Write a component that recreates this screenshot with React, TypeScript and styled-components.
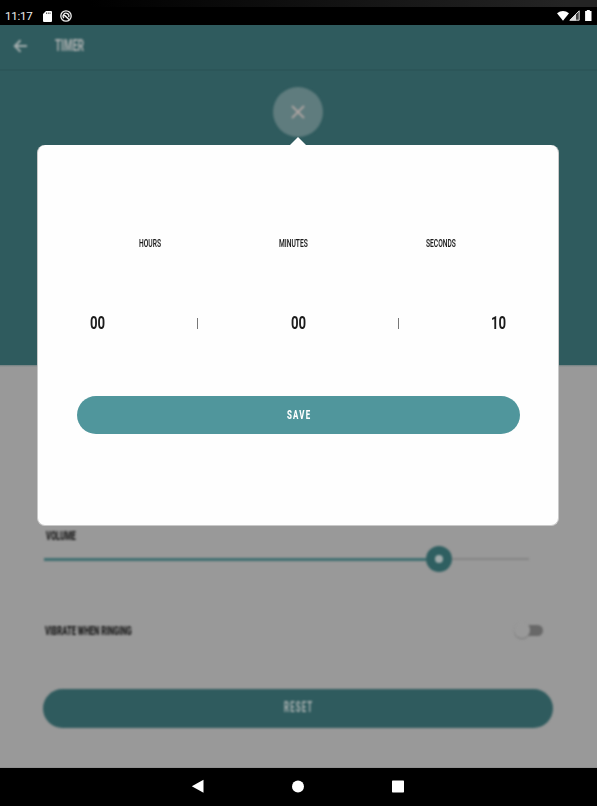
import React, { useLayoutEffect, useRef, useState } from "react";
import styled, { createGlobalStyle } from "styled-components";

const GlobalStyle = createGlobalStyle`
  * { box-sizing: border-box; }
  body { margin: 0; background: #000; font-family: Roboto, "Liberation Sans", sans-serif; overflow: hidden; }
  button { border: 0; padding: 0; font-family: inherit; }
  svg { display: block; }
`;

const Screen = styled.div`
  position: relative;
  display: flex;
  flex-direction: column;
  width: 597px;
  height: 806px;
  overflow: hidden;
`;
const TopEdge = styled.div`
  height: 7px;
  background: linear-gradient(90deg, #000 15%, #242424 95%);
`;
const StatusBar = styled.div`
  height: 18px;
  display: flex;
  align-items: center;
  justify-content: space-between;
  padding: 0 4px 0 5px;
  background: #000;
`;
const StatusGroup = styled.div`
  display: flex;
  align-items: center;
`;
const Clock = styled.span`
  width: 38px;
  color: #eee;
  font-size: 11.5px;
  line-height: 18px;
  letter-spacing: -0.2px;
`;
const Hero = styled.div`
  height: 340px;
  background: #2f5b5e;
`;
const AppBar = styled.div`
  height: 46px;
  display: flex;
  align-items: center;
  padding: 0 0 2px 13px;
  gap: 27px;
  border-bottom: 2px solid #2c5659;
`;
const Soft = styled.div`
  filter: blur(1.3px);
`;
const CloseRow = styled(Soft)`
  display: flex;
  justify-content: center;
  padding: 16px 1px 0 0;
`;
const CloseButton = styled.button`
  width: 50px;
  height: 50px;
  border-radius: 50%;
  background: #5f7c7e;
  display: grid;
  place-items: center;
`;
const Settings = styled.div`
  height: 403px;
  background: linear-gradient(#708081 0, #999 2px, #999 402px, #858585 403px);
  padding: 164px 44px 0;
`;
const SliderRow = styled(Soft)`
  display: flex;
  align-items: center;
  width: 485px;
  height: 26px;
  margin-top: 4px;
`;
const SliderPart = styled.div<{ $active?: boolean }>`
  width: ${(p) => (p.$active ? "382px" : "77px")};
  height: ${(p) => (p.$active ? "3px" : "2px")};
  background: ${(p) => (p.$active ? "#3f6e70" : "#858585")};
`;
const SliderThumb = styled.div`
  width: 26px;
  height: 26px;
  border-radius: 50%;
  border: 9px solid #2f5f61;
  background: #a0aaaa;
`;
const VibrateRow = styled(Soft)`
  display: flex;
  justify-content: space-between;
  align-items: center;
  height: 18px;
  margin: 49px 10px 0 1px;
`;
const SwitchTrack = styled.div`
  display: flex;
  align-items: center;
  width: 24px;
  height: 11px;
  border-radius: 6px;
  background: #686868;
`;
const SwitchKnob = styled.div`
  flex: none;
  width: 16px;
  height: 16px;
  margin-left: -5px;
  border-radius: 50%;
  background: #999;
  box-shadow: 0 1px 1px #777;
`;
const ResetButton = styled.button`
  display: flex;
  align-items: center;
  justify-content: center;
  width: 510px;
  height: 39px;
  margin: 50px 0 0 -1px;
  padding-bottom: 3px;
  border-radius: 20px;
  background: #2f5b5e;
  filter: blur(1.1px);
`;
const NavBar = styled.div`
  height: 38px;
  display: flex;
  justify-content: center;
  gap: 86px;
  padding: 11px 2px 0 0;
  background: #000;
`;
const Popup = styled.div`
  position: absolute;
  left: 37px;
  top: 145px;
  width: 522px;
  height: 381px;
  border-radius: 8px;
  border: 1px solid #c9c9c9;
  border-top: 0;
  background: #fefefe;
  padding: 93px 38px 0;
`;
const Pointer = styled.svg`
  position: absolute;
  left: 252px;
  top: -8px;
`;
const LabelRow = styled.div`
  display: flex;
  height: 12px;
  align-items: center;
  padding-left: 63px;
`;
const LabelCell = styled.div<{ $before?: number }>`
  margin-left: ${(p) => p.$before ?? 0}px;
`;
const ValueRow = styled.div`
  display: flex;
  align-items: center;
  justify-content: space-between;
  height: 20px;
  margin-top: 63px;
  padding: 0 14px 0 14px;
`;
const Separator = styled.div`
  width: 1px;
  height: 11px;
  margin-top: 1px;
  background: #777;
`;
const SaveButton = styled.button`
  display: flex;
  align-items: center;
  justify-content: center;
  width: 443px;
  height: 38.5px;
  margin: 62.5px 0 0 0.5px;
  padding-bottom: 1px;
  border-radius: 20px;
  background: #50969c;
`;
const TextBox = styled.span<{ $width: number }>`
  display: flex;
  width: ${(p) => p.$width}px;
`;
const TextRun = styled.span<{ $size: number; $color: string; $weight: number; $spacing: number }>`
  flex: none;
  white-space: nowrap;
  transform-origin: 0 50%;
  font-size: ${(p) => p.$size}px;
  line-height: 1;
  color: ${(p) => p.$color};
  font-weight: ${(p) => p.$weight};
  letter-spacing: ${(p) => p.$spacing}px;
`;

interface CondensedProps {
  children: string;
  width: number;
  size: number;
  color?: string;
  weight?: number;
  spacing?: number;
}

/* Fits a text run horizontally into a fixed width, giving condensed capitals. */
function Condensed({ children, width, size, color = "#1c1c1c", weight = 600, spacing = 0 }: CondensedProps) {
  const run = useRef<HTMLSpanElement>(null);
  const [scale, setScale] = useState(1);
  useLayoutEffect(() => {
    if (run.current) setScale(width / (run.current.offsetWidth - spacing));
  }, [width, children, spacing]);
  return (
    <TextBox $width={width}>
      <TextRun ref={run} $size={size} $color={color} $weight={weight} $spacing={spacing} style={{ transform: `scaleX(${scale})` }}>
        {children}
      </TextRun>
    </TextBox>
  );
}

export default function App() {
  return (
    <>
      <GlobalStyle />
      <Screen>
        <TopEdge />
        <StatusBar>
          <StatusGroup>
            <Clock>11:17</Clock>
            <svg width="9" height="11" viewBox="0 0 9 11">
              <path d="M3 0h5q1 0 1 1v9q0 1-1 1H1q-1 0-1-1V3z" fill="#fff" />
              <path d="M3.5 1.5v1.5M5.3 1.5v1.5M7 1.5v1.5" stroke="#333" strokeWidth=".8" />
            </svg>
            <svg width="22" height="12" viewBox="0 0 22 12">
              <g fill="none" stroke="#eee" strokeWidth="1.3">
                <circle cx="14" cy="6" r="5.2" />
                <path d="M11.9 8.1A2.9 2.9 0 1 1 16.7 7.2M11.3 4.6l5.8 5M13 5.6l2.6 2.4" />
              </g>
            </svg>
          </StatusGroup>
          <svg width="36" height="12" viewBox="0 0 36 12">
            <path d="M0 3.2Q6-1.4 12 3.2L6 10.7z" fill="#fff" />
            <path d="M22.2.8v9.4h-9.4z" fill="#444" stroke="#ddd" strokeWidth="1" />
            <path d="M19 4v6.5h-6.5z" fill="#ddd" />
            <path d="M29.8 0h3v1h1.7v10h-6.4V1h1.7z" fill="#fff" />
          </svg>
        </StatusBar>

        <Hero>
          <AppBar>
            <Soft>
              <svg width="15" height="14" viewBox="0 0 15 14" fill="none" stroke="#a3adad" strokeWidth="2">
                <path d="M14 7H2M7.5 1.2L1.8 7l5.7 5.8" />
              </svg>
            </Soft>
            <Soft>
              <Condensed width={29} size={16} weight={800} color="#a8adad">TIMER</Condensed>
            </Soft>
          </AppBar>
          <CloseRow>
            <CloseButton aria-label="Close">
              <svg width="14" height="14" viewBox="0 0 14 14" stroke="#aaa3a0" strokeWidth="2">
                <path d="M1 1l12 12M13 1L1 13" />
              </svg>
            </CloseButton>
          </CloseRow>
        </Hero>

        <Settings>
          <Soft>
            <LabelCell $before={2}>
              <Condensed width={30} size={13} weight={900} color="#1c1c1c">VOLUME</Condensed>
            </LabelCell>
          </Soft>
          <SliderRow>
            <SliderPart $active />
            <SliderThumb />
            <SliderPart />
          </SliderRow>
          <VibrateRow>
            <Condensed width={87} size={13} weight={900} color="#1c1c1c">VIBRATE WHEN RINGING</Condensed>
            <SwitchTrack>
              <SwitchKnob />
            </SwitchTrack>
          </VibrateRow>
          <ResetButton>
            <Condensed width={28} size={14} weight={800} spacing={2} color="#a8b0b0">RESET</Condensed>
          </ResetButton>
        </Settings>

        <NavBar>
          <svg width="14" height="14" viewBox="0 0 14 14"><path d="M12.5.8v13L.8 7.3z" fill="#fff" /></svg>
          <svg width="14" height="14" viewBox="0 0 14 14"><circle cx="7" cy="7.5" r="6" fill="#fff" /></svg>
          <svg width="14" height="14" viewBox="0 0 14 14"><rect x="1" y="1.5" width="12" height="12" rx=".7" fill="#fff" /></svg>
        </NavBar>

        <Popup>
          <Pointer width="16" height="9" viewBox="0 0 16 9"><path d="M0 8L8 0l8 8v1H0z" fill="#fefefe" /></Pointer>
          <LabelRow>
            <Condensed width={22} size={11.5}>HOURS</Condensed>
            <LabelCell $before={118}>
              <Condensed width={29} size={11.5}>MINUTES</Condensed>
            </LabelCell>
            <LabelCell $before={118}>
              <Condensed width={30} size={11.5}>SECONDS</Condensed>
            </LabelCell>
          </LabelRow>
          <ValueRow>
            <Condensed width={15} size={18.5} weight={700}>00</Condensed>
            <Separator />
            <Condensed width={15} size={18.5} weight={700}>00</Condensed>
            <Separator />
            <Condensed width={15} size={18.5} weight={700}>10</Condensed>
          </ValueRow>
          <SaveButton>
            <Condensed width={23} size={13} weight={800} spacing={2} color="#fff">SAVE</Condensed>
          </SaveButton>
        </Popup>
      </Screen>
    </>
  );
}
